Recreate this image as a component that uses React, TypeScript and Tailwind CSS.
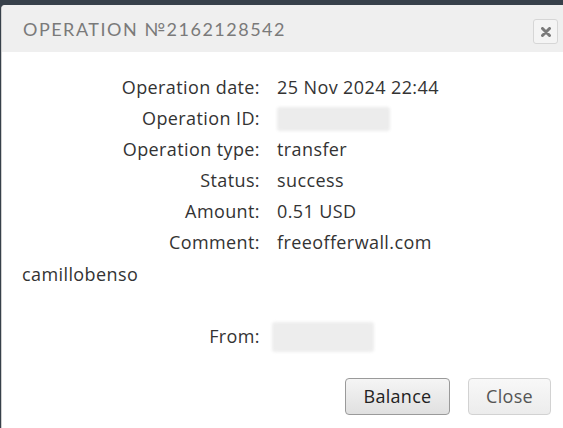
import React from 'react'

type Row = { label: string; value?: string; blur?: string }

const rows: Row[] = [
  { label: 'Operation date:', value: '25 Nov 2024 22:44' },
  { label: 'Operation ID:', blur: 'w-[113px]' },
  { label: 'Operation type:', value: 'transfer' },
  { label: 'Status:', value: 'success' },
  { label: 'Amount:', value: '0.51 USD' },
  { label: 'Comment:', value: 'freeofferwall.com' },
]

function CloseIcon() {
  return (
    <svg width="10" height="10" viewBox="0 0 10 10">
      <path d="M1.5 1.5 L8.5 8.5 M8.5 1.5 L1.5 8.5" stroke="#7a7a7a" strokeWidth="3" strokeLinecap="round" />
    </svg>
  )
}

export default function App() {
  return (
    <div className="w-[563px] h-[428px] bg-[#37404a] pt-[5px] overflow-hidden font-['Open_Sans',sans-serif]">
      <div className="h-full bg-white ml-[1px] rounded-tl-[4px] border-l border-[#cfcfcf] flex flex-col">
        {/* Header */}
        <div className="h-[47px] bg-[#efefef] flex items-center justify-between pl-[21px] pr-[5px] rounded-tl-[4px]">
          <h2 className="text-[18px] tracking-[1.5px] text-[#7a7a7a] font-['Lato',sans-serif] font-normal mt-[2px]">
            OPERATION №2162128542
          </h2>
          <button className="w-[25px] h-[25px] mt-[6px] border border-[#d6d6d6] rounded-[3px] bg-[#f4f4f4] flex items-center justify-center">
            <CloseIcon />
          </button>
        </div>

        {/* Body */}
        <div className="flex-1 pt-[20px] text-[18px] tracking-[0.4px] text-[#333]">
          {rows.map((r) => (
            <div key={r.label} className="flex h-[31px] items-center">
              <div className="w-[258px] text-right shrink-0">{r.label}</div>
              <div className="pl-[17px]">
                {r.value ?? <div className={`${r.blur} h-[24px] bg-[#ececec] rounded-[3px] blur-[1.5px]`} />}
              </div>
            </div>
          ))}
          <div className="pl-[20px] h-[31px] flex items-center mt-[1px]">camillobenso</div>
          <div className="h-[31px]" />
          <div className="flex h-[31px] items-center">
            <div className="w-[258px] text-right shrink-0">From:</div>
            <div className="pl-[12px]">
              <div className="w-[102px] h-[30px] bg-[#ededed] rounded-[3px] blur-[1.5px]" />
            </div>
          </div>
          <div className="flex justify-end gap-[18px] pr-[12px] mt-[26px]">
            <button className="w-[105px] h-[37px] rounded-[4px] border border-[#9a9a9a] bg-gradient-to-b from-[#f5f5f5] to-[#e0e0e0] text-[#222] text-[18px] tracking-[0.3px]">
              Balance
            </button>
            <button className="w-[83px] h-[37px] rounded-[4px] border border-[#d2d2d2] bg-gradient-to-b from-[#f8f8f8] to-[#ececec] text-[#555] text-[18px] tracking-[0.3px]">
              Close
            </button>
          </div>
        </div>
      </div>
    </div>
  )
}
